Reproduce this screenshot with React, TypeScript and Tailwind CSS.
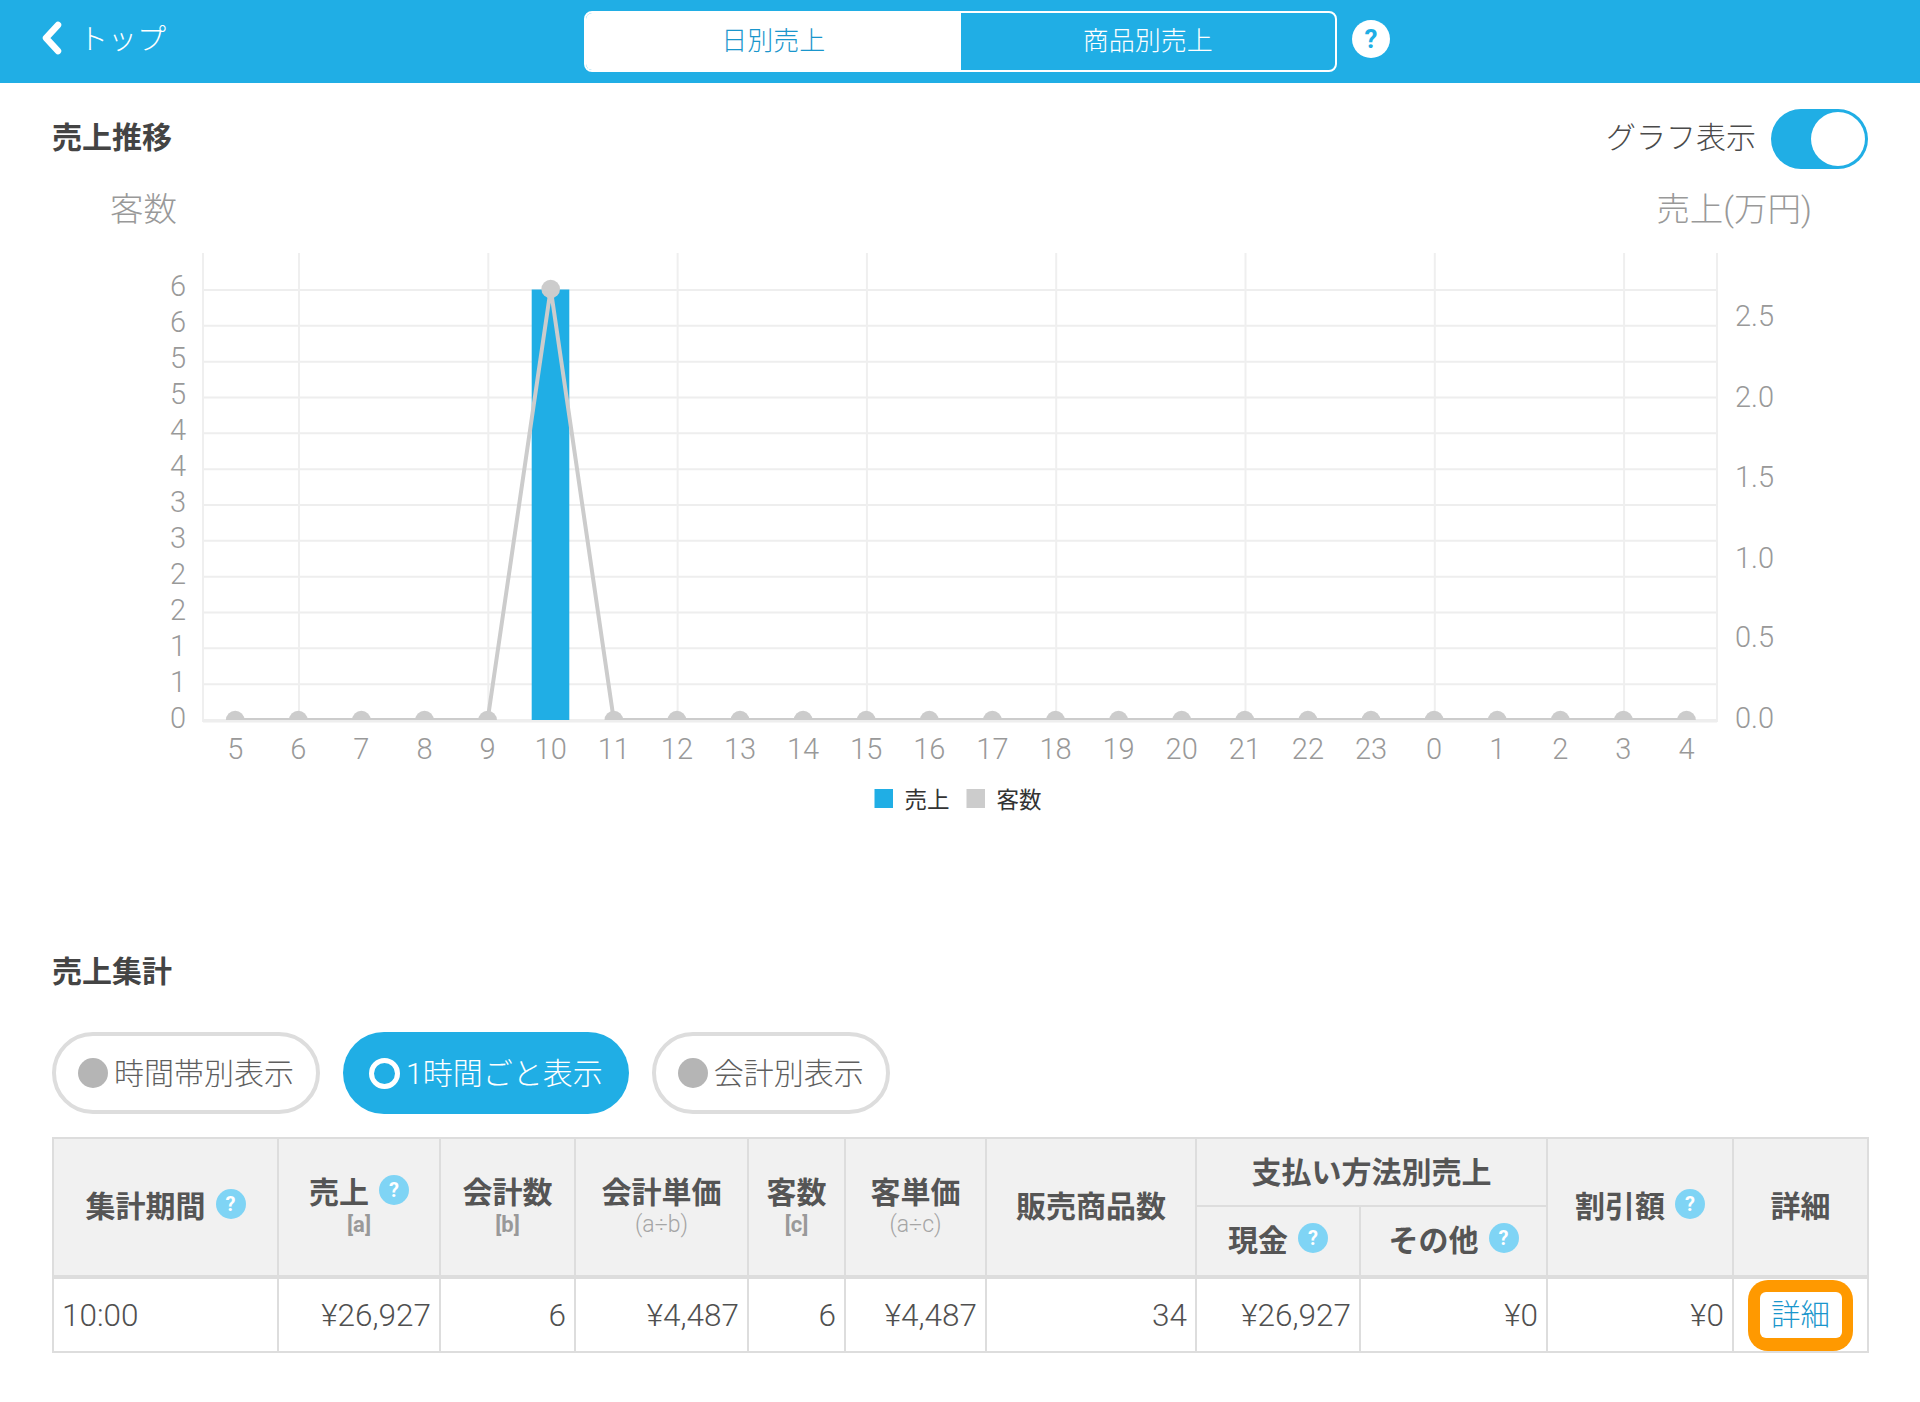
import { ReactNode } from 'react'

const hours = [5, 6, 7, 8, 9, 10, 11, 12, 13, 14, 15, 16, 17, 18, 19, 20, 21, 22, 23, 0, 1, 2, 3, 4]
const leftTicks = ['6', '6', '5', '5', '4', '4', '3', '3', '2', '2', '1', '1', '0']
const rightTicks = ['2.5', '2.0', '1.5', '1.0', '0.5', '0.0']
const rightY = [316, 397, 477, 558, 637, 718]

const xAt = (i: number) => 235.2 + 63.1 * i

function HelpIcon({ className = '' }: { className?: string }) {
  return (
    <span className={`inline-flex h-[30px] w-[30px] shrink-0 items-center justify-center rounded-full bg-[#7fd4f5] text-[20px] font-bold leading-none text-white ${className}`}>
      ?
    </span>
  )
}

function Chart() {
  const points = hours.map((_, i) => `${xAt(i)},${i === 5 ? 289 : 720}`).join(' ')

  return (
    <svg className="block h-[580px] w-[1920px]" viewBox="0 240 1920 580">
      <defs>
        <clipPath id="plot-clip">
          <rect x="0" y="240" width="1920" height="480" />
        </clipPath>
      </defs>

      {/* grid */}
      {leftTicks.map((_, i) => (
        <line key={i} x1="203" x2="1717" y1={290 + i * 35.83} y2={290 + i * 35.83} stroke="#eeeeee" strokeWidth="2" />
      ))}
      {[203, 299, 488.3, 677.6, 866.9, 1056.2, 1245.5, 1434.8, 1624.1, 1717].map((x) => (
        <line key={x} x1={x} x2={x} y1="253" y2="722" stroke="#efefef" strokeWidth="2" />
      ))}
      <line x1="203" x2="1717" y1="721" y2="721" stroke="#eeeeee" strokeWidth="3" />

      {/* series */}
      <rect x="531.7" y="289.5" width="37.6" height="430.5" fill="#20aee5" />
      <polyline points={points} fill="none" stroke="#cccccc" strokeWidth="4" clipPath="url(#plot-clip)" />
      <g clipPath="url(#plot-clip)">
        {hours.map((h, i) => (
          <circle key={h} cx={xAt(i)} cy={i === 5 ? 289 : 720} r="9.3" fill="#cccccc" />
        ))}
      </g>

      {/* axis labels */}
      <g fill="#999999" fontSize="29" fontWeight="300">
        {leftTicks.map((t, i) => (
          <text key={i} x="186" y={296 + i * 36} textAnchor="end">
            {t}
          </text>
        ))}
        {rightTicks.map((t, i) => (
          <text key={t} x="1735" y={rightY[i] + 10}>
            {t}
          </text>
        ))}
        {hours.map((h, i) => (
          <text key={h} x={xAt(i)} y="759" textAnchor="middle">
            {h}
          </text>
        ))}
      </g>

      {/* legend */}
      <rect x="874.5" y="789" width="18.5" height="19" fill="#20aee5" />
      <text x="904.5" y="807.5" fontSize="22.5" fill="#333333">売上</text>
      <rect x="966.5" y="789" width="18.5" height="19" fill="#cccccc" />
      <text x="996.5" y="807.5" fontSize="22.5" fill="#333333">客数</text>
    </svg>
  )
}

function Pill({ label, active = false }: { label: string; active?: boolean }) {
  if (active) {
    return (
      <div className="flex h-[82px] items-center rounded-full bg-[#20aee5] pl-[26px] pr-[26px] text-[30px] text-white">
        <span className="mr-[6px] h-[31px] w-[31px] rounded-full border-[5px] border-white" />
        {label}
      </div>
    )
  }
  return (
    <div className="flex h-[82px] items-center rounded-full border-4 border-[#dddddd] pl-[22px] pr-[22px] text-[30px] text-[#5f5f5f]">
      <span className="mr-[6px] h-[30px] w-[30px] rounded-full bg-[#b5b5b5]" />
      {label}
    </div>
  )
}

function Head({ title, sub, help, subBold, rowSpan = 2, colSpan }: { title: ReactNode; sub?: string; help?: boolean; subBold?: boolean; rowSpan?: number; colSpan?: number }) {
  return (
    <th rowSpan={rowSpan} colSpan={colSpan} className="border-2 border-b-4 border-[#dddddd] bg-[#f1f1f1] p-0 text-center align-middle text-[30px] font-bold text-[#555555]">
      <div className="flex items-center justify-center gap-[10px] leading-[36px]">
        <span>{title}</span>
        {help && <HelpIcon className="-mt-[6px]" />}
      </div>
      {sub && (
        <div className={`leading-[28px] ${subBold ? 'text-[22px] font-bold text-[#999999]' : 'text-[23px] font-light text-[#a5a5a5]'}`}>{sub}</div>
      )}
    </th>
  )
}

export default function App() {
  const cell = 'border-2 border-[#dddddd] px-[8px] pt-[1px] text-right text-[31.5px] font-light text-[#505050]'

  return (
    <div className="min-h-[1402px] w-[1920px] bg-white font-['Roboto','Noto_Sans_CJK_JP',sans-serif]">
      {/* Header */}
      <header className="flex h-[83px] items-center bg-[#20aee5] text-white">
        <a href="#" className="flex w-[584px] items-center pb-[7px] pl-[38px] text-[29px] font-light">
          <svg className="h-[36px] w-[28px]" viewBox="0 0 28 36" fill="none" stroke="white" strokeWidth="6.5" strokeLinecap="round" strokeLinejoin="round">
            <polyline points="20,5 8,18 20,31" />
          </svg>
          <span className="ml-[13px] mt-[5px]">トップ</span>
        </a>
        <div className="flex h-[61px] w-[753px] rounded-lg border-2 border-white text-[26px] font-light">
          <div className="flex flex-1 items-center justify-center rounded-l-md bg-white text-[#1a96cc]">日別売上</div>
          <div className="flex flex-1 items-center justify-center">商品別売上</div>
        </div>
        <span className="mb-[5px] ml-[15px] flex h-[38px] w-[38px] items-center justify-center rounded-full bg-white text-[26px] font-bold leading-none text-[#20aee5]">?</span>
      </header>

      <main className="px-[52px]">
        {/* Graph section */}
        <div className="mt-[26px] flex h-[60px] items-center justify-between">
          <h2 className="-mt-[4px] text-[30px] font-bold text-[#444444]">売上推移</h2>
          <div className="flex items-center gap-[15px]">
            <span className="-mt-[4px] text-[30px] font-light text-[#4a4a4a]">グラフ表示</span>
            <div className="flex h-[60px] w-[97px] justify-end rounded-full bg-[#20aee5] p-[3px]">
              <span className="h-[54px] w-[54px] rounded-full bg-white" />
            </div>
          </div>
        </div>
        <div className="mt-[24px] flex h-[34px] items-center justify-between pl-[58px] pr-[56px] text-[33.5px] font-light text-[#999999]">
          <span>客数</span>
          <span>売上(万円)</span>
        </div>
      </main>

      <div className="mt-[13px]">
        <Chart />
      </div>

      <main className="px-[52px]">
        {/* Summary section */}
        <h2 className="mt-[133px] text-[30px] font-bold leading-[38px] text-[#444444]">売上集計</h2>
        <div className="mt-[41px] flex gap-[23px] font-light">
          <Pill label="時間帯別表示" />
          <Pill label="1時間ごと表示" active />
          <Pill label="会計別表示" />
        </div>

        <table className="mt-[23px] w-[1815px] table-fixed">
          <colgroup>
            <col className="w-[225px]" />
            <col className="w-[162px]" />
            <col className="w-[135px]" />
            <col className="w-[173px]" />
            <col className="w-[97px]" />
            <col className="w-[141px]" />
            <col className="w-[210px]" />
            <col className="w-[164px]" />
            <col className="w-[187px]" />
            <col className="w-[186px]" />
            <col className="w-[135px]" />
          </colgroup>
          <thead>
            <tr className="h-[68px]">
              <Head title="集計期間" help />
              <Head title="売上" sub="[a]" help subBold />
              <Head title="会計数" sub="[b]" subBold />
              <Head title="会計単価" sub="(a÷b)" />
              <Head title="客数" sub="[c]" subBold />
              <Head title="客単価" sub="(a÷c)" />
              <Head title="販売商品数" />
              <th colSpan={2} className="border-2 border-[#dddddd] bg-[#f1f1f1] p-0 text-center text-[30px] font-bold text-[#555555]">支払い方法別売上</th>
              <Head title="割引額" help />
              <Head title="詳細" />
            </tr>
            <tr className="h-[71px]">
              <Head title="現金" help rowSpan={1} />
              <Head title="その他" help rowSpan={1} />
            </tr>
          </thead>
          <tbody>
            <tr className="h-[75px]">
              <td className={`${cell} !text-left`}>10:00</td>
              <td className={cell}>¥26,927</td>
              <td className={cell}>6</td>
              <td className={cell}>¥4,487</td>
              <td className={cell}>6</td>
              <td className={cell}>¥4,487</td>
              <td className={cell}>34</td>
              <td className={cell}>¥26,927</td>
              <td className={cell}>¥0</td>
              <td className={cell}>¥0</td>
              <td className="border-2 border-[#dddddd] p-0 text-center">
                <a href="#" className="mx-auto flex h-[71px] w-[105px] items-center justify-center rounded-[20px] bg-[#ff9900]">
                  <span className="flex h-[46px] w-[82px] items-center justify-center rounded-md bg-white text-[29.5px] font-light text-[#1a96cc]">詳細</span>
                </a>
              </td>
            </tr>
          </tbody>
        </table>
      </main>
    </div>
  )
}
